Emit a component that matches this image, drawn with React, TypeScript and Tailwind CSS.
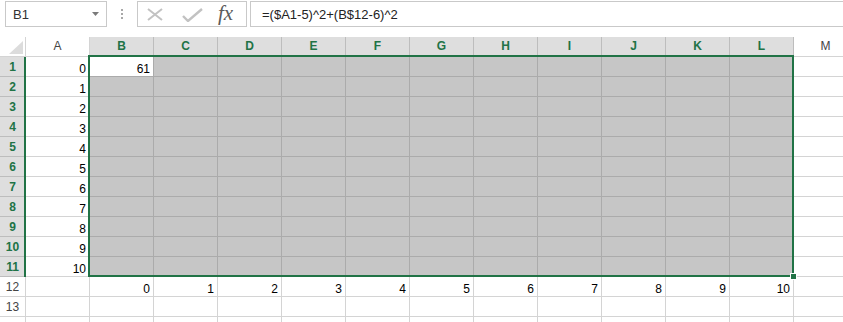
import React from "react";

const COLS = ["A", "B", "C", "D", "E", "F", "G", "H", "I", "J", "K", "L", "M"];
const ROWS = Array.from({ length: 14 }, (_, i) => i + 1);

function cellValue(r: number, c: number): string {
  if (c === 0 && r <= 11) return String(r - 1);
  if (r === 1 && c === 1) return "61";
  if (r === 12 && c >= 1 && c <= 11) return String(c - 1);
  return "";
}

function FormulaBar() {
  return (
    <div className="h-[37px] flex items-start pt-[1px] pl-[5px]">
      {/* name box */}
      <div className="w-[102px] h-[26px] border border-[#c9c9c9] flex items-center justify-between pl-[7px] pr-[7px]">
        <span className="text-[13px] text-[#333] leading-none">B1</span>
        <svg width="7" height="4" viewBox="0 0 7 4">
          <path d="M0 0h7L3.5 4z" fill="#7a7a7a" />
        </svg>
      </div>
      {/* grip dots */}
      <div className="ml-[14px] mt-[8px] flex flex-col gap-[2px]">
        <span className="w-[2px] h-[2px] bg-[#a8a8a8]" />
        <span className="w-[2px] h-[2px] bg-[#a8a8a8]" />
        <span className="w-[2px] h-[2px] bg-[#a8a8a8]" />
      </div>
      {/* cancel / enter / fx */}
      <div className="ml-[14px] w-[110px] h-[26px] border border-[#c9c9c9] flex items-center pl-[9px]">
        <svg width="16" height="13" viewBox="0 0 16 13" className="mt-[1px]">
          <path d="M1 1l14 11M15 1L1 12" stroke="#c2c2c2" strokeWidth="2" fill="none" />
        </svg>
        <svg width="21" height="14" viewBox="0 0 21 14" className="ml-[19px] mt-[2px]">
          <path d="M1 8l5 5L20 1" stroke="#c2c2c2" strokeWidth="2.4" fill="none" />
        </svg>
        <span className="ml-[15px] font-['Liberation_Serif',serif] italic text-[21px] leading-none text-[#5b5b5b] -mt-[2px]">
          fx
        </span>
      </div>
      {/* formula */}
      <div className="ml-[3px] flex-1 h-[26px] border border-r-0 border-[#c9c9c9] flex items-center pl-[11px]">
        <span className="text-[13px] text-[#222] leading-none">=($A1-5)^2+(B$12-6)^2</span>
      </div>
    </div>
  );
}

function HeaderRow() {
  return (
    <>
      <div className="h-[20px] border-r border-b border-[#d4d4d4] bg-white flex items-end justify-end pr-[2px] pb-[2px]">
        <svg width="14" height="13" viewBox="0 0 14 13">
          <path d="M14 0v13H0z" fill="#dcdcdc" />
        </svg>
      </div>
      {COLS.map((col, c) => {
        const sel = c >= 1 && c <= 11;
        return (
          <div
            key={col}
            className={
              sel
                ? "h-[20px] border-r border-b border-[#bdbdbd] bg-[#dedede] text-[#217346] font-bold flex items-center justify-center text-[12px] leading-[19px]"
                : "h-[20px] border-r border-b border-[#d4d4d4] bg-white text-[#444] flex items-center justify-center text-[12px] leading-[19px]"
            }
          >
            {col}
          </div>
        );
      })}
    </>
  );
}

function DataRow({ r }: { r: number }) {
  const rowSel = r <= 11;
  return (
    <>
      <div
        className={
          rowSel
            ? "h-[20px] border-r border-b border-[#bdbdbd] bg-[#dedede] text-[#217346] font-bold text-center text-[12px] leading-[17px] pt-[2px]"
            : "h-[20px] border-r border-b border-[#d4d4d4] bg-white text-[#444] text-center text-[12px] leading-[17px] pt-[2px]"
        }
      >
        {r <= 13 ? r : ""}
      </div>
      {COLS.map((col, c) => {
        const sel = rowSel && c >= 1 && c <= 11;
        const active = r === 1 && c === 1;
        const v = cellValue(r, c);
        let cls = "h-[20px] border-r border-b border-[#d4d4d4] bg-white";
        if (sel && active) cls = "h-[20px] border-r border-b border-[#ababab] bg-white";
        else if (sel) cls = "h-[20px] border-r border-b border-[#ababab] bg-[#c6c6c6]";
        return (
          <div key={col} className={cls + " text-right pr-[3px] pt-[6px] text-[12px] leading-[13px] text-black"}>
            {v}
          </div>
        );
      })}
    </>
  );
}

export default function App() {
  return (
    <div className="w-[843px] h-[322px] overflow-hidden bg-white relative font-['Liberation_Sans',Arial,sans-serif]">
      <FormulaBar />
      <div className="relative">
        <div className="grid grid-cols-[26px_repeat(13,64px)] w-max">
          <HeaderRow />
          {ROWS.map((r) => (
            <DataRow key={r} r={r} />
          ))}
        </div>
        {/* row header selection edge */}
        <div className="absolute left-[24px] top-[20px] w-[2px] h-[220px] bg-[#217346]" />
        {/* selection outline */}
        <div className="absolute left-[88px] top-[18px] w-[706px] h-[222px] border-2 border-[#217346]" />
        {/* fill handle */}
        <div className="absolute left-[790px] top-[236px] w-[7px] h-[7px] bg-[#217346] border border-white" />
      </div>
    </div>
  );
}
